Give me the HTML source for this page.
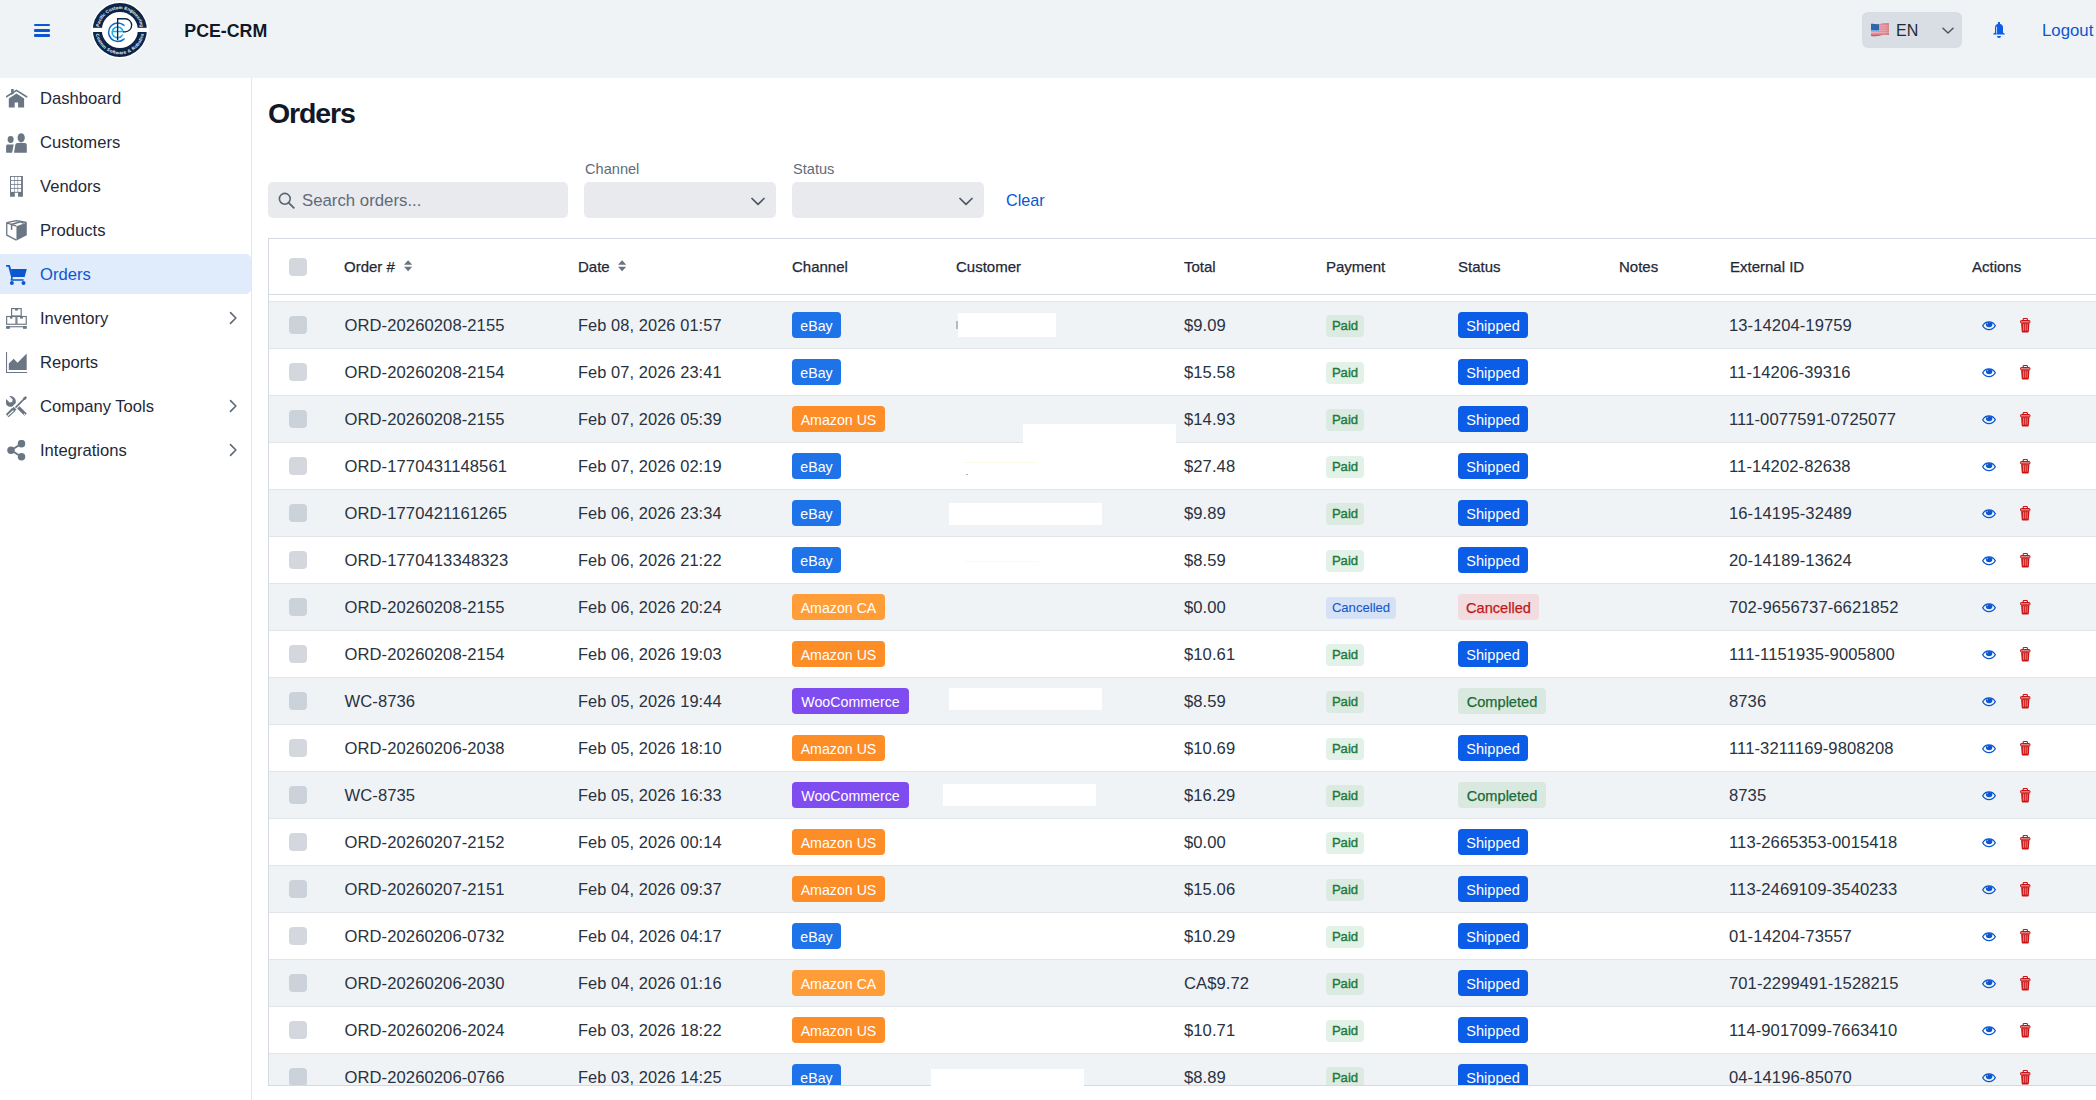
<!DOCTYPE html>
<html><head><meta charset="utf-8"><title>PCE-CRM Orders</title>
<style>
*{box-sizing:border-box;margin:0;padding:0}
html,body{width:2096px;height:1100px;overflow:hidden;background:#fff;font-family:"Liberation Sans",sans-serif;color:#1f2937}
.abs{position:absolute}
#hdr{position:absolute;left:0;top:0;width:2096px;height:78px;background:#f0f3f6}
#burger{position:absolute;left:34px;top:24.2px;width:16px;height:13px}
#burger i{position:absolute;left:0;width:16px;height:2.2px;border-radius:1.1px;background:#0b57d0}
#logo{position:absolute;left:91px;top:1px}
#brand{position:absolute;left:184.3px;top:21px;font-size:17.8px;font-weight:700;color:#111827;white-space:nowrap}
#lang{position:absolute;left:1862px;top:12px;width:100px;height:36px;border-radius:6px;background:#d9dde4}
#flag{position:absolute;left:9px;top:10px}
#en{position:absolute;left:34px;top:9.5px;font-size:16px;color:#1f2937}
#langchev{position:absolute;left:80px;top:14.5px;line-height:0}
#bell{position:absolute;left:1993px;top:21px}
#logout{position:absolute;left:2042px;top:20.7px;font-size:16.8px;color:#0b57d0;white-space:nowrap}
#side{position:absolute;left:0;top:78px;width:252px;height:1022px;border-right:1px solid #e3e6ea;background:#fff}
.nav{position:absolute;left:0;width:251px;height:40px}
.nav.active{background:#e0ebfc;border-radius:0 5px 5px 0}
.nicon{position:absolute;left:6px;top:10px;width:22px;height:22px}
.nlabel{position:absolute;left:40px;top:10.7px;font-size:16.6px;line-height:20px;color:#1f2937;white-space:nowrap}
.active .nlabel{color:#0b57d0}
.nchev{position:absolute;left:229px;top:12.5px}
#title{position:absolute;left:268px;top:96px;font-size:28.5px;font-weight:700;color:#111827;line-height:34px;letter-spacing:-1.1px}
.lbl{position:absolute;top:160px;font-size:14.6px;color:#5f6b7a;line-height:18px}
.inp{position:absolute;top:182px;height:36px;border-radius:5px;background:#e8eaee}
#search{left:268px;width:300px}
#search .ic{position:absolute;left:10px;top:10px}
#search .ph{position:absolute;left:34px;top:9px;font-size:16.8px;color:#5f6b7a;line-height:20px;white-space:nowrap}
#chsel{left:584px;width:192px}
#stsel{left:792px;width:192px}
.inp .sc{position:absolute;left:167px;top:15px;line-height:0;display:block}
#clear{position:absolute;left:1006px;top:190.3px;font-size:16.2px;color:#0b57d0;line-height:20px}
#tbl{position:absolute;left:268px;top:238px;width:1900px;height:848px;border:1px solid #d5dae0;overflow:hidden;background:#fff}
#thead{position:absolute;left:0;top:0;width:1900px;height:56px;border-bottom:1px solid #d5dae0;background:#fff}
.th{position:absolute;top:18px;font-size:15px;font-weight:400;color:#1f2937;line-height:20px;white-space:nowrap;-webkit-text-stroke:0.25px #1f2937}
.sort{position:absolute;top:21px;line-height:0}
.cb{position:absolute;left:20px;top:14px;width:18px;height:18px;border-radius:4px;background:#d4d8de}
#thead .cb{top:19px !important}
.row{position:absolute;left:0;width:1900px;height:47px;border-top:1px solid #e1e5ea;background:#fff}
.row.odd{background:#f0f3f6}
.row.odd .cb{background:#ccd2d9}
.t{position:absolute;top:14px;font-size:16.6px;line-height:20px;color:#283241;white-space:nowrap;letter-spacing:0.08px}
.c-ord{left:75.5px}
.c-date{left:309px;font-size:16.4px !important;top:13.4px !important}
.c-tot{left:915px}
.c-ext{left:1460px}
.bdg{position:absolute;left:523px;top:10px;height:26px;border-radius:4px;font-size:14.6px;line-height:28.4px;color:#fff;text-align:center;white-space:nowrap}
.bdg.ch-ebay,.bdg.ch-amzus,.bdg.ch-amzca,.bdg.ch-woo{font-size:14.2px}
.ch-ebay{background:#1f73e8}
.ch-amzus{background:#fd8d27}
.ch-amzca{background:#ff9e38}
.ch-woo{background:#7f4cf0}
.bdg.st-ship,.bdg.st-cancel,.bdg.st-done{left:1189px}
.st-ship{background:#0b5ce6}
.st-cancel{background:#f2dcdf;color:#c01818 !important;-webkit-text-stroke:0.25px #c01818}
.st-done{background:#d9e9e0;color:#1a6b36 !important;-webkit-text-stroke:0.25px #1a6b36}
.pb{position:absolute;left:1057px;top:13px;height:22px;border-radius:4px;font-size:13.1px;font-weight:400;-webkit-text-stroke:0.4px currentColor;line-height:22.8px;text-align:center;white-space:nowrap}
.pay-paid{background:#dcebe2;color:#1e7a3c}
.row:not(.odd) .pay-paid{background:#e3f2e8}
.row:not(.odd) .st-done{background:#e3f2e8}
.pay-cancel{background:#d5e2f6;color:#1558cc;-webkit-text-stroke:0.1px #1558cc !important}
.eye{position:absolute;left:1713px;top:19px;line-height:0}
.trash{position:absolute;left:1751px;top:16px;line-height:0}
.redact{position:absolute;background:#fff}
</style></head><body>
<div id="hdr">
 <div id="burger"><i style="top:0"></i><i style="top:5.15px"></i><i style="top:10.3px"></i></div>
 <div id="logo"><svg width="58" height="58" viewBox="0 0 58 58">
<circle cx="28.85" cy="29" r="28.4" fill="#fff"/>
<circle cx="28.85" cy="29" r="22.5" fill="none" stroke="#0b2447" stroke-width="9"/>
<rect x="0" y="26.8" width="58" height="4.2" fill="#fff"/>
<g fill="#f2f5f9" font-family="Liberation Sans" font-weight="700" font-size="4.5" text-anchor="middle"><text x="8.42" y="24.58" transform="rotate(-77.8 8.42 24.58)">P</text><text x="9.26" y="21.71" transform="rotate(-69.6 9.26 21.71)">a</text><text x="10.31" y="19.35" transform="rotate(-62.5 10.31 19.35)">c</text><text x="11.19" y="17.83" transform="rotate(-57.7 11.19 17.83)">i</text><text x="11.87" y="16.81" transform="rotate(-54.3 11.87 16.81)">f</text><text x="12.61" y="15.84" transform="rotate(-51.0 12.61 15.84)">i</text><text x="13.78" y="14.52" transform="rotate(-46.2 13.78 14.52)">c</text><text x="17.09" y="11.72" transform="rotate(-34.2 17.09 11.72)">C</text><text x="19.79" y="10.17" transform="rotate(-25.7 19.79 10.17)">u</text><text x="22.18" y="9.19" transform="rotate(-18.6 22.18 9.19)">s</text><text x="24.00" y="8.67" transform="rotate(-13.4 24.00 8.67)">t</text><text x="26.00" y="8.29" transform="rotate(-7.8 26.00 8.29)">o</text><text x="29.39" y="8.11" transform="rotate(1.5 29.39 8.11)">m</text><text x="34.34" y="8.83" transform="rotate(15.2 34.34 8.83)">E</text><text x="37.16" y="9.82" transform="rotate(23.4 37.16 9.82)">n</text><text x="39.57" y="11.06" transform="rotate(30.9 39.57 11.06)">g</text><text x="41.16" y="12.11" transform="rotate(36.1 41.16 12.11)">i</text><text x="42.64" y="13.30" transform="rotate(41.3 42.64 13.30)">n</text><text x="44.56" y="15.22" transform="rotate(48.7 44.56 15.22)">e</text><text x="46.22" y="17.37" transform="rotate(56.2 46.22 17.37)">e</text><text x="47.33" y="19.23" transform="rotate(62.1 47.33 19.23)">r</text><text x="47.92" y="20.45" transform="rotate(65.9 47.92 20.45)">i</text><text x="48.62" y="22.22" transform="rotate(71.1 48.62 22.22)">n</text><text x="49.33" y="24.84" transform="rotate(78.5 49.33 24.84)">g</text><text x="5.20" y="34.57" transform="rotate(76.8 5.20 34.57)">C</text><text x="6.22" y="37.86" transform="rotate(68.6 6.22 37.86)">u</text><text x="7.42" y="40.45" transform="rotate(61.9 7.42 40.45)">s</text><text x="8.48" y="42.25" transform="rotate(56.9 8.48 42.25)">t</text><text x="9.80" y="44.08" transform="rotate(51.6 9.80 44.08)">o</text><text x="12.34" y="46.83" transform="rotate(42.8 12.34 46.83)">m</text><text x="16.80" y="50.10" transform="rotate(29.7 16.80 50.10)">S</text><text x="19.77" y="51.54" transform="rotate(21.9 19.77 51.54)">o</text><text x="21.90" y="52.28" transform="rotate(16.6 21.90 52.28)">f</text><text x="23.35" y="52.67" transform="rotate(13.1 23.35 52.67)">t</text><text x="26.00" y="53.13" transform="rotate(6.7 26.00 53.13)">w</text><text x="29.45" y="53.29" transform="rotate(-1.4 29.45 53.29)">a</text><text x="31.84" y="53.12" transform="rotate(-7.1 31.84 53.12)">r</text><text x="34.20" y="52.70" transform="rotate(-12.7 34.20 52.70)">e</text><text x="38.75" y="51.19" transform="rotate(-24.0 38.75 51.19)">&amp;</text><text x="43.28" y="48.55" transform="rotate(-36.4 43.28 48.55)">R</text><text x="45.90" y="46.31" transform="rotate(-44.6 45.90 46.31)">o</text><text x="47.90" y="44.08" transform="rotate(-51.6 47.90 44.08)">b</text><text x="49.62" y="41.62" transform="rotate(-58.7 49.62 41.62)">o</text><text x="50.69" y="39.64" transform="rotate(-64.0 50.69 39.64)">t</text><text x="51.25" y="38.41" transform="rotate(-67.2 51.25 38.41)">i</text><text x="51.93" y="36.59" transform="rotate(-71.8 51.93 36.59)">c</text><text x="52.63" y="33.98" transform="rotate(-78.2 52.63 33.98)">s</text></g>
<path d="M33 24.3A9.25 9.25 0 1 0 33 38.1" fill="none" stroke="#1668c4" stroke-width="1.55"/>
<path d="M21.3 30.45H31.9A5.4 5.4 0 1 0 31.2 34.2" fill="none" stroke="#22aee6" stroke-width="1.65"/>
<path d="M26.6 17.7H34.1A6.55 6.55 0 0 1 34.1 30.8H32" fill="none" stroke="#0b2447" stroke-width="1.35"/>
<rect x="25.95" y="17.05" width="1.35" height="22.2" fill="#0b2447"/>
<g fill="#5aa0e0"><circle cx="33.2" cy="24.6" r=".8"/><circle cx="33.2" cy="37.9" r=".8"/><circle cx="31.6" cy="34" r=".7"/></g>
</svg></div>
 <div id="brand">PCE-CRM</div>
 <div id="lang"><span id="flag"><svg width="19" height="15" viewBox="0 0 19 15"><defs><clipPath id="fc"><path d="M0 1.9C3 1.6 5.6 2.9 8.3 2.1 11 1.2 14 0.7 18 1.2V13C14 12.6 11 13.1 8.3 13.8 5.6 14.5 3 14.2 0 14z"/></clipPath><linearGradient id="fg" x1="0" x2="1" y1="0" y2="0"><stop offset="0" stop-color="#000" stop-opacity="0"/><stop offset=".75" stop-color="#000" stop-opacity=".05"/><stop offset="1" stop-color="#000" stop-opacity=".15"/></linearGradient></defs><g clip-path="url(#fc)"><rect width="19" height="15" fill="#ec8f9b"/><g fill="#f4b3bb"><rect y="3.3" width="19" height="1"/><rect y="5.5" width="19" height="1"/><rect y="7.7" width="19" height="1"/><rect y="9.9" width="19" height="1"/></g><rect y="12.6" width="19" height="2.4" fill="#c9616d"/><rect x="0" y="0" width="8" height="9" fill="#2f67ad"/><rect x="0" y="8.2" width="8" height="0.9" fill="#7fc3ef"/><rect width="19" height="15" fill="url(#fg)"/></g></svg></span><span id="en">EN</span><span id="langchev"><svg width="12" height="8" viewBox="0 0 12 8"><path d="M1 1.2l5 4.8 5-4.8" fill="none" stroke="#4b5563" stroke-width="1.5" stroke-linecap="round" stroke-linejoin="round"/></svg></span></div>
 <div id="bell"><svg width="13" height="18" viewBox="0 0 13 18"><rect x="4.9" y="0.9" width="2.1" height="2.6" rx=".4" fill="#0b5ce6"/><path d="M2 6.2C2 4.3 3.8 2.8 6 2.8s4 1.5 4 3.4V11.4L11.9 13V13.5H0.1V13L2 11.4z" fill="#0b5ce6"/><path d="M3.6 5.6V12.6" stroke="#fff" stroke-width=".9" opacity=".85"/><path d="M4 15H8A2 2 0 0 1 4 15z" fill="#0b5ce6"/></svg></div>
 <div id="logout">Logout</div>
</div>
<div id="side">
<div class="nav" style="top:0px"><span class="nicon"><svg width="22" height="22" viewBox="0 0 22 22"><path d="M0.3 8.8L10.45 2.4 20.6 8.8" fill="none" stroke="#6b7684" stroke-width="1.6" stroke-linecap="round" stroke-linejoin="round"/><path d="M5.1 1h2.6v4.6L5.1 7.3z" fill="#6b7684"/><path d="M2.8 10.4L10.45 5.5 18.1 10.4V19.5H12.1V14.5H8.7V19.5H2.8z" fill="#6b7684"/></svg></span><span class="nlabel">Dashboard</span></div><div class="nav" style="top:44px"><span class="nicon"><svg width="22" height="22" viewBox="0 0 22 22"><ellipse cx="4.6" cy="7.5" rx="3" ry="3.4" fill="#6b7684"/><path d="M1.6 12.4h6.1l-1.6 8.3H0.1V13.9c0-.8.7-1.5 1.5-1.5z" fill="#6b7684"/><ellipse cx="15.2" cy="5.8" rx="3.6" ry="4.6" fill="#6b7684"/><path d="M11.4 10.9h7.4c1.1 0 2 .9 2 2v7.8H8l1.3-7.7c.2-1.2 1-2.1 2.1-2.1z" fill="#6b7684"/></svg></span><span class="nlabel">Customers</span></div><div class="nav" style="top:88px"><span class="nicon"><svg width="22" height="22" viewBox="0 0 22 22"><path d="M4.05 0.05h12.85v20.75h-4.8v-4h-3.3v4H4.05z" fill="#6b7684"/><rect x="5.00" y="0.85" width="3.0" height="3.15" fill="#fff"/><rect x="5.00" y="4.80" width="3.0" height="3.15" fill="#fff"/><rect x="5.00" y="8.75" width="3.0" height="3.15" fill="#fff"/><rect x="5.00" y="12.70" width="3.0" height="3.15" fill="#fff"/><rect x="8.55" y="0.85" width="3.0" height="3.15" fill="#fff"/><rect x="8.55" y="4.80" width="3.0" height="3.15" fill="#fff"/><rect x="8.55" y="8.75" width="3.0" height="3.15" fill="#fff"/><rect x="8.55" y="12.70" width="3.0" height="3.15" fill="#fff"/><rect x="12.10" y="0.85" width="3.0" height="3.15" fill="#fff"/><rect x="12.10" y="4.80" width="3.0" height="3.15" fill="#fff"/><rect x="12.10" y="8.75" width="3.0" height="3.15" fill="#fff"/><rect x="12.10" y="12.70" width="3.0" height="3.15" fill="#fff"/></svg></span><span class="nlabel">Vendors</span></div><div class="nav" style="top:132px"><span class="nicon"><svg width="22" height="22" viewBox="0 0 22 22"><path d="M10.45 6.2L20.8 2.4V15.3L10.45 20.6z" fill="#6b7684"/><path d="M10.45 6.2L0.75 2.9V15.2L10.45 20.1" fill="none" stroke="#6b7684" stroke-width="1.3" stroke-linejoin="round"/><path d="M0.75 2.7L10.45 0.6 20.5 2.5" fill="none" stroke="#6b7684" stroke-width="1.3" stroke-linejoin="round"/><path d="M5.2 4.6L15.4 1.6" stroke="#6b7684" stroke-width="1.6"/><path d="M5.6 4.8V9.9" stroke="#6b7684" stroke-width="1.5"/><path d="M15 1.6L17.6 3.4" stroke="#6b7684" stroke-width="1.4"/></svg></span><span class="nlabel">Products</span></div><div class="nav active" style="top:176px"><span class="nicon"><svg width="22" height="22" viewBox="0 0 22 22"><path d="M0.1 1.9H3.2L6.2 13.7" fill="none" stroke="#0b57d0" stroke-width="1.9" stroke-linejoin="round"/><path d="M5 5.1H20.8L18.6 13.1H5.8z" fill="#0b57d0"/><path d="M6 13.6L5.4 16H17.6" fill="none" stroke="#0b57d0" stroke-width="1.6" stroke-linejoin="round"/><circle cx="5.9" cy="18.9" r="2" fill="#0b57d0"/><circle cx="17.5" cy="18.9" r="2" fill="#0b57d0"/></svg></span><span class="nlabel">Orders</span></div><div class="nav" style="top:220px"><span class="nicon"><svg width="22" height="22" viewBox="0 0 22 22"><g fill="none" stroke="#6b7684" stroke-width="1.15"><rect x="5.6" y="0.6" width="9.6" height="7.4"/><rect x="0.65" y="8.5" width="9.35" height="7.75"/><rect x="10.9" y="8.5" width="9.35" height="7.75"/></g><g fill="#6b7684"><rect x="9.1" y="0.6" width="2.7" height="2"/><rect x="4" y="8.5" width="2.4" height="2.1"/><rect x="14.1" y="8.5" width="2.8" height="2.1"/><rect x="0.1" y="18.2" width="20.7" height="1.1"/><rect x="0.1" y="18.2" width="3.8" height="2.6"/><rect x="17" y="18.2" width="3.8" height="2.6"/></g></svg></span><span class="nlabel">Inventory</span><span class=nchev><svg width="9" height="14" viewBox="0 0 9 14"><path d="M1.5 1.6l5.4 5.4-5.4 5.4" fill="none" stroke="#5b6573" stroke-width="1.55" stroke-linecap="round" stroke-linejoin="round"/></svg></span></div><div class="nav" style="top:264px"><span class="nicon"><svg width="22" height="22" viewBox="0 0 22 22"><path d="M0.5 0.4V20.5H20.6" fill="none" stroke="#6b7684" stroke-width="1.1" stroke-linecap="round"/><path d="M2.8 11.4L7.7 6.7 11.5 10.8 20.7 1.55V17.9H2.8z" fill="#6b7684"/></svg></span><span class="nlabel">Reports</span></div><div class="nav" style="top:308px"><span class="nicon"><svg width="22" height="22" viewBox="0 0 22 22"><path d="M3.2 0.1C5 -.1 6.9.5 8.2 1.8c1.5 1.5 2 3.6 1.4 5.5L8.3 8.6 6.3 10.6C4.4 11.2 2.3 10.7.9 9.3-.1 8.3-.1 6.500.1 2.9l3.5 3.5 2.6-.5.5-2.500z" fill="#6b7684"/><path d="M12.3 11.3L19.6 18.7" stroke="#6b7684" stroke-width="3.3"/><circle cx="18.4" cy="18.2" r=".7" fill="#fff"/><path d="M19.8 0.3L21 1.5 19.5 3.7 18.3 4 10.1 12.2 8.9 11 17.1 2.8 17.4 1.6z" fill="#6b7684"/><path d="M7.6 10.8L10.6 13.8 9.2 14.6 8.9 15.6 2.6 21.2-.3 18.3 5.8 12.2 6.8 11.9z" fill="#6b7684"/><path d="M7 15L2.1 19.4" stroke="#fff" stroke-width="1.2" stroke-linecap="round"/></svg></span><span class="nlabel">Company Tools</span><span class=nchev><svg width="9" height="14" viewBox="0 0 9 14"><path d="M1.5 1.6l5.4 5.4-5.4 5.4" fill="none" stroke="#5b6573" stroke-width="1.55" stroke-linecap="round" stroke-linejoin="round"/></svg></span></div><div class="nav" style="top:352px"><span class="nicon"><svg width="22" height="22" viewBox="0 0 22 22"><circle cx="15.5" cy="3.7" r="3.75" fill="#6b7684"/><circle cx="5" cy="10.2" r="3.75" fill="#6b7684"/><circle cx="15.5" cy="16.8" r="3.75" fill="#6b7684"/><path d="M15.5 3.7L5 10.2 15.5 16.8" fill="none" stroke="#6b7684" stroke-width="1.9"/></svg></span><span class="nlabel">Integrations</span><span class=nchev><svg width="9" height="14" viewBox="0 0 9 14"><path d="M1.5 1.6l5.4 5.4-5.4 5.4" fill="none" stroke="#5b6573" stroke-width="1.55" stroke-linecap="round" stroke-linejoin="round"/></svg></span></div>
</div>
<div id="title">Orders</div>
<div class="lbl" style="left:585px">Channel</div>
<div class="lbl" style="left:793px">Status</div>
<div class="inp" id="search"><span class="ic"><svg width="17" height="17" viewBox="0 0 17 17"><circle cx="6.8" cy="6.8" r="5.4" fill="none" stroke="#5b6472" stroke-width="1.6"/><path d="M10.8 10.8l5 5" stroke="#5b6472" stroke-width="1.8" stroke-linecap="round"/></svg></span><span class="ph">Search orders...</span></div>
<div class="inp" id="chsel"><span class="sc"><svg width="14" height="9" viewBox="0 0 14 9"><path d="M1 1.5l6 5.8 6-5.8" fill="none" stroke="#4b5563" stroke-width="1.7" stroke-linecap="round" stroke-linejoin="round"/></svg></span></div>
<div class="inp" id="stsel"><span class="sc"><svg width="14" height="9" viewBox="0 0 14 9"><path d="M1 1.5l6 5.8 6-5.8" fill="none" stroke="#4b5563" stroke-width="1.7" stroke-linecap="round" stroke-linejoin="round"/></svg></span></div>
<div id="clear">Clear</div>
<div id="tbl">
 <div id="thead">
  <span class="cb"></span>
  <span class="th" style="left:75px">Order #</span><span class="sort" style="left:134.6px"><svg width="9" height="12" viewBox="0 0 9 12"><path d="M4.1 0.3L8.2 4.8H0z M4.1 11.3L0 6.8H8.2z" fill="#6b7280"/></svg></span>
  <span class="th" style="left:309px">Date</span><span class="sort" style="left:348.6px"><svg width="9" height="12" viewBox="0 0 9 12"><path d="M4.1 0.3L8.2 4.8H0z M4.1 11.3L0 6.8H8.2z" fill="#6b7280"/></svg></span>
  <span class="th" style="left:523px">Channel</span>
  <span class="th" style="left:687px">Customer</span>
  <span class="th" style="left:915px">Total</span>
  <span class="th" style="left:1057px">Payment</span>
  <span class="th" style="left:1189px">Status</span>
  <span class="th" style="left:1350px">Notes</span>
  <span class="th" style="left:1461px">External ID</span>
  <span class="th" style="left:1703px">Actions</span>
 </div>
 <div class="row odd" style="top:62px">
<span class="cb"></span>
<span class="t c-ord">ORD-20260208-2155</span>
<span class="t c-date">Feb 08, 2026 01:57</span>
<span class="bdg ch-ebay" style="width:49px">eBay</span>
<span class="t c-tot">$9.09</span>
<span class="pb pay-paid" style="width:38px">Paid</span>
<span class="bdg st-ship" style="width:70px">Shipped</span>
<span class="t c-ext">13-14204-19759</span>
<span class="eye"><svg width="15" height="10" viewBox="0 0 15 10"><path d="M7 0.9C4 0.9 1.7 2.8 0.7 4.8 1.7 6.7 4 8.6 7 8.6s5.3-1.9 6.3-3.8C12.3 2.8 10 0.9 7 0.9z" fill="none" stroke="#0b57d0" stroke-width="1.3"/><ellipse cx="7.1" cy="3.6" rx="3.2" ry="2.7" fill="#0b57d0"/><circle cx="5.4" cy="2.6" r=".7" fill="#8fb3ec"/></svg></span>
<span class="trash"><svg width="11" height="15" viewBox="0 0 11 15"><path d="M3.2 2.4V1.3c0-.5.3-.8.8-.8h2.6c.5 0 .8.3.8.8v1.1" fill="none" stroke="#c81414" stroke-width="1.1"/><rect x="0.55" y="2.5" width="9.4" height="2.5" rx=".7" fill="#df8080" stroke="#c81414" stroke-width="1"/><path d="M1.1 5.2h8.3l-.55 8c-.05.8-.6 1.3-1.3 1.3H3c-.7 0-1.25-.5-1.3-1.3z" fill="#c81414"/><rect x="2.9" y="6.1" width=".9" height="6.6" fill="#fff" opacity=".55"/><rect x="4.8" y="6.1" width=".9" height="6.6" fill="#fff" opacity=".55"/><rect x="6.7" y="6.1" width=".9" height="6.6" fill="#fff" opacity=".55"/></svg></span>
</div><div class="row" style="top:109px">
<span class="cb"></span>
<span class="t c-ord">ORD-20260208-2154</span>
<span class="t c-date">Feb 07, 2026 23:41</span>
<span class="bdg ch-ebay" style="width:49px">eBay</span>
<span class="t c-tot">$15.58</span>
<span class="pb pay-paid" style="width:38px">Paid</span>
<span class="bdg st-ship" style="width:70px">Shipped</span>
<span class="t c-ext">11-14206-39316</span>
<span class="eye"><svg width="15" height="10" viewBox="0 0 15 10"><path d="M7 0.9C4 0.9 1.7 2.8 0.7 4.8 1.7 6.7 4 8.6 7 8.6s5.3-1.9 6.3-3.8C12.3 2.8 10 0.9 7 0.9z" fill="none" stroke="#0b57d0" stroke-width="1.3"/><ellipse cx="7.1" cy="3.6" rx="3.2" ry="2.7" fill="#0b57d0"/><circle cx="5.4" cy="2.6" r=".7" fill="#8fb3ec"/></svg></span>
<span class="trash"><svg width="11" height="15" viewBox="0 0 11 15"><path d="M3.2 2.4V1.3c0-.5.3-.8.8-.8h2.6c.5 0 .8.3.8.8v1.1" fill="none" stroke="#c81414" stroke-width="1.1"/><rect x="0.55" y="2.5" width="9.4" height="2.5" rx=".7" fill="#df8080" stroke="#c81414" stroke-width="1"/><path d="M1.1 5.2h8.3l-.55 8c-.05.8-.6 1.3-1.3 1.3H3c-.7 0-1.25-.5-1.3-1.3z" fill="#c81414"/><rect x="2.9" y="6.1" width=".9" height="6.6" fill="#fff" opacity=".55"/><rect x="4.8" y="6.1" width=".9" height="6.6" fill="#fff" opacity=".55"/><rect x="6.7" y="6.1" width=".9" height="6.6" fill="#fff" opacity=".55"/></svg></span>
</div><div class="row odd" style="top:156px">
<span class="cb"></span>
<span class="t c-ord">ORD-20260208-2155</span>
<span class="t c-date">Feb 07, 2026 05:39</span>
<span class="bdg ch-amzus" style="width:93px">Amazon US</span>
<span class="t c-tot">$14.93</span>
<span class="pb pay-paid" style="width:38px">Paid</span>
<span class="bdg st-ship" style="width:70px">Shipped</span>
<span class="t c-ext">111-0077591-0725077</span>
<span class="eye"><svg width="15" height="10" viewBox="0 0 15 10"><path d="M7 0.9C4 0.9 1.7 2.8 0.7 4.8 1.7 6.7 4 8.6 7 8.6s5.3-1.9 6.3-3.8C12.3 2.8 10 0.9 7 0.9z" fill="none" stroke="#0b57d0" stroke-width="1.3"/><ellipse cx="7.1" cy="3.6" rx="3.2" ry="2.7" fill="#0b57d0"/><circle cx="5.4" cy="2.6" r=".7" fill="#8fb3ec"/></svg></span>
<span class="trash"><svg width="11" height="15" viewBox="0 0 11 15"><path d="M3.2 2.4V1.3c0-.5.3-.8.8-.8h2.6c.5 0 .8.3.8.8v1.1" fill="none" stroke="#c81414" stroke-width="1.1"/><rect x="0.55" y="2.5" width="9.4" height="2.5" rx=".7" fill="#df8080" stroke="#c81414" stroke-width="1"/><path d="M1.1 5.2h8.3l-.55 8c-.05.8-.6 1.3-1.3 1.3H3c-.7 0-1.25-.5-1.3-1.3z" fill="#c81414"/><rect x="2.9" y="6.1" width=".9" height="6.6" fill="#fff" opacity=".55"/><rect x="4.8" y="6.1" width=".9" height="6.6" fill="#fff" opacity=".55"/><rect x="6.7" y="6.1" width=".9" height="6.6" fill="#fff" opacity=".55"/></svg></span>
</div><div class="row" style="top:203px">
<span class="cb"></span>
<span class="t c-ord">ORD-1770431148561</span>
<span class="t c-date">Feb 07, 2026 02:19</span>
<span class="bdg ch-ebay" style="width:49px">eBay</span>
<span class="t c-tot">$27.48</span>
<span class="pb pay-paid" style="width:38px">Paid</span>
<span class="bdg st-ship" style="width:70px">Shipped</span>
<span class="t c-ext">11-14202-82638</span>
<span class="eye"><svg width="15" height="10" viewBox="0 0 15 10"><path d="M7 0.9C4 0.9 1.7 2.8 0.7 4.8 1.7 6.7 4 8.6 7 8.6s5.3-1.9 6.3-3.8C12.3 2.8 10 0.9 7 0.9z" fill="none" stroke="#0b57d0" stroke-width="1.3"/><ellipse cx="7.1" cy="3.6" rx="3.2" ry="2.7" fill="#0b57d0"/><circle cx="5.4" cy="2.6" r=".7" fill="#8fb3ec"/></svg></span>
<span class="trash"><svg width="11" height="15" viewBox="0 0 11 15"><path d="M3.2 2.4V1.3c0-.5.3-.8.8-.8h2.6c.5 0 .8.3.8.8v1.1" fill="none" stroke="#c81414" stroke-width="1.1"/><rect x="0.55" y="2.5" width="9.4" height="2.5" rx=".7" fill="#df8080" stroke="#c81414" stroke-width="1"/><path d="M1.1 5.2h8.3l-.55 8c-.05.8-.6 1.3-1.3 1.3H3c-.7 0-1.25-.5-1.3-1.3z" fill="#c81414"/><rect x="2.9" y="6.1" width=".9" height="6.6" fill="#fff" opacity=".55"/><rect x="4.8" y="6.1" width=".9" height="6.6" fill="#fff" opacity=".55"/><rect x="6.7" y="6.1" width=".9" height="6.6" fill="#fff" opacity=".55"/></svg></span>
</div><div class="row odd" style="top:250px">
<span class="cb"></span>
<span class="t c-ord">ORD-1770421161265</span>
<span class="t c-date">Feb 06, 2026 23:34</span>
<span class="bdg ch-ebay" style="width:49px">eBay</span>
<span class="t c-tot">$9.89</span>
<span class="pb pay-paid" style="width:38px">Paid</span>
<span class="bdg st-ship" style="width:70px">Shipped</span>
<span class="t c-ext">16-14195-32489</span>
<span class="eye"><svg width="15" height="10" viewBox="0 0 15 10"><path d="M7 0.9C4 0.9 1.7 2.8 0.7 4.8 1.7 6.7 4 8.6 7 8.6s5.3-1.9 6.3-3.8C12.3 2.8 10 0.9 7 0.9z" fill="none" stroke="#0b57d0" stroke-width="1.3"/><ellipse cx="7.1" cy="3.6" rx="3.2" ry="2.7" fill="#0b57d0"/><circle cx="5.4" cy="2.6" r=".7" fill="#8fb3ec"/></svg></span>
<span class="trash"><svg width="11" height="15" viewBox="0 0 11 15"><path d="M3.2 2.4V1.3c0-.5.3-.8.8-.8h2.6c.5 0 .8.3.8.8v1.1" fill="none" stroke="#c81414" stroke-width="1.1"/><rect x="0.55" y="2.5" width="9.4" height="2.5" rx=".7" fill="#df8080" stroke="#c81414" stroke-width="1"/><path d="M1.1 5.2h8.3l-.55 8c-.05.8-.6 1.3-1.3 1.3H3c-.7 0-1.25-.5-1.3-1.3z" fill="#c81414"/><rect x="2.9" y="6.1" width=".9" height="6.6" fill="#fff" opacity=".55"/><rect x="4.8" y="6.1" width=".9" height="6.6" fill="#fff" opacity=".55"/><rect x="6.7" y="6.1" width=".9" height="6.6" fill="#fff" opacity=".55"/></svg></span>
</div><div class="row" style="top:297px">
<span class="cb"></span>
<span class="t c-ord">ORD-1770413348323</span>
<span class="t c-date">Feb 06, 2026 21:22</span>
<span class="bdg ch-ebay" style="width:49px">eBay</span>
<span class="t c-tot">$8.59</span>
<span class="pb pay-paid" style="width:38px">Paid</span>
<span class="bdg st-ship" style="width:70px">Shipped</span>
<span class="t c-ext">20-14189-13624</span>
<span class="eye"><svg width="15" height="10" viewBox="0 0 15 10"><path d="M7 0.9C4 0.9 1.7 2.8 0.7 4.8 1.7 6.7 4 8.6 7 8.6s5.3-1.9 6.3-3.8C12.3 2.8 10 0.9 7 0.9z" fill="none" stroke="#0b57d0" stroke-width="1.3"/><ellipse cx="7.1" cy="3.6" rx="3.2" ry="2.7" fill="#0b57d0"/><circle cx="5.4" cy="2.6" r=".7" fill="#8fb3ec"/></svg></span>
<span class="trash"><svg width="11" height="15" viewBox="0 0 11 15"><path d="M3.2 2.4V1.3c0-.5.3-.8.8-.8h2.6c.5 0 .8.3.8.8v1.1" fill="none" stroke="#c81414" stroke-width="1.1"/><rect x="0.55" y="2.5" width="9.4" height="2.5" rx=".7" fill="#df8080" stroke="#c81414" stroke-width="1"/><path d="M1.1 5.2h8.3l-.55 8c-.05.8-.6 1.3-1.3 1.3H3c-.7 0-1.25-.5-1.3-1.3z" fill="#c81414"/><rect x="2.9" y="6.1" width=".9" height="6.6" fill="#fff" opacity=".55"/><rect x="4.8" y="6.1" width=".9" height="6.6" fill="#fff" opacity=".55"/><rect x="6.7" y="6.1" width=".9" height="6.6" fill="#fff" opacity=".55"/></svg></span>
</div><div class="row odd" style="top:344px">
<span class="cb"></span>
<span class="t c-ord">ORD-20260208-2155</span>
<span class="t c-date">Feb 06, 2026 20:24</span>
<span class="bdg ch-amzca" style="width:93px">Amazon CA</span>
<span class="t c-tot">$0.00</span>
<span class="pb pay-cancel" style="width:70px">Cancelled</span>
<span class="bdg st-cancel" style="width:81px">Cancelled</span>
<span class="t c-ext">702-9656737-6621852</span>
<span class="eye"><svg width="15" height="10" viewBox="0 0 15 10"><path d="M7 0.9C4 0.9 1.7 2.8 0.7 4.8 1.7 6.7 4 8.6 7 8.6s5.3-1.9 6.3-3.8C12.3 2.8 10 0.9 7 0.9z" fill="none" stroke="#0b57d0" stroke-width="1.3"/><ellipse cx="7.1" cy="3.6" rx="3.2" ry="2.7" fill="#0b57d0"/><circle cx="5.4" cy="2.6" r=".7" fill="#8fb3ec"/></svg></span>
<span class="trash"><svg width="11" height="15" viewBox="0 0 11 15"><path d="M3.2 2.4V1.3c0-.5.3-.8.8-.8h2.6c.5 0 .8.3.8.8v1.1" fill="none" stroke="#c81414" stroke-width="1.1"/><rect x="0.55" y="2.5" width="9.4" height="2.5" rx=".7" fill="#df8080" stroke="#c81414" stroke-width="1"/><path d="M1.1 5.2h8.3l-.55 8c-.05.8-.6 1.3-1.3 1.3H3c-.7 0-1.25-.5-1.3-1.3z" fill="#c81414"/><rect x="2.9" y="6.1" width=".9" height="6.6" fill="#fff" opacity=".55"/><rect x="4.8" y="6.1" width=".9" height="6.6" fill="#fff" opacity=".55"/><rect x="6.7" y="6.1" width=".9" height="6.6" fill="#fff" opacity=".55"/></svg></span>
</div><div class="row" style="top:391px">
<span class="cb"></span>
<span class="t c-ord">ORD-20260208-2154</span>
<span class="t c-date">Feb 06, 2026 19:03</span>
<span class="bdg ch-amzus" style="width:93px">Amazon US</span>
<span class="t c-tot">$10.61</span>
<span class="pb pay-paid" style="width:38px">Paid</span>
<span class="bdg st-ship" style="width:70px">Shipped</span>
<span class="t c-ext">111-1151935-9005800</span>
<span class="eye"><svg width="15" height="10" viewBox="0 0 15 10"><path d="M7 0.9C4 0.9 1.7 2.8 0.7 4.8 1.7 6.7 4 8.6 7 8.6s5.3-1.9 6.3-3.8C12.3 2.8 10 0.9 7 0.9z" fill="none" stroke="#0b57d0" stroke-width="1.3"/><ellipse cx="7.1" cy="3.6" rx="3.2" ry="2.7" fill="#0b57d0"/><circle cx="5.4" cy="2.6" r=".7" fill="#8fb3ec"/></svg></span>
<span class="trash"><svg width="11" height="15" viewBox="0 0 11 15"><path d="M3.2 2.4V1.3c0-.5.3-.8.8-.8h2.6c.5 0 .8.3.8.8v1.1" fill="none" stroke="#c81414" stroke-width="1.1"/><rect x="0.55" y="2.5" width="9.4" height="2.5" rx=".7" fill="#df8080" stroke="#c81414" stroke-width="1"/><path d="M1.1 5.2h8.3l-.55 8c-.05.8-.6 1.3-1.3 1.3H3c-.7 0-1.25-.5-1.3-1.3z" fill="#c81414"/><rect x="2.9" y="6.1" width=".9" height="6.6" fill="#fff" opacity=".55"/><rect x="4.8" y="6.1" width=".9" height="6.6" fill="#fff" opacity=".55"/><rect x="6.7" y="6.1" width=".9" height="6.6" fill="#fff" opacity=".55"/></svg></span>
</div><div class="row odd" style="top:438px">
<span class="cb"></span>
<span class="t c-ord">WC-8736</span>
<span class="t c-date">Feb 05, 2026 19:44</span>
<span class="bdg ch-woo" style="width:117px">WooCommerce</span>
<span class="t c-tot">$8.59</span>
<span class="pb pay-paid" style="width:38px">Paid</span>
<span class="bdg st-done" style="width:88px">Completed</span>
<span class="t c-ext">8736</span>
<span class="eye"><svg width="15" height="10" viewBox="0 0 15 10"><path d="M7 0.9C4 0.9 1.7 2.8 0.7 4.8 1.7 6.7 4 8.6 7 8.6s5.3-1.9 6.3-3.8C12.3 2.8 10 0.9 7 0.9z" fill="none" stroke="#0b57d0" stroke-width="1.3"/><ellipse cx="7.1" cy="3.6" rx="3.2" ry="2.7" fill="#0b57d0"/><circle cx="5.4" cy="2.6" r=".7" fill="#8fb3ec"/></svg></span>
<span class="trash"><svg width="11" height="15" viewBox="0 0 11 15"><path d="M3.2 2.4V1.3c0-.5.3-.8.8-.8h2.6c.5 0 .8.3.8.8v1.1" fill="none" stroke="#c81414" stroke-width="1.1"/><rect x="0.55" y="2.5" width="9.4" height="2.5" rx=".7" fill="#df8080" stroke="#c81414" stroke-width="1"/><path d="M1.1 5.2h8.3l-.55 8c-.05.8-.6 1.3-1.3 1.3H3c-.7 0-1.25-.5-1.3-1.3z" fill="#c81414"/><rect x="2.9" y="6.1" width=".9" height="6.6" fill="#fff" opacity=".55"/><rect x="4.8" y="6.1" width=".9" height="6.6" fill="#fff" opacity=".55"/><rect x="6.7" y="6.1" width=".9" height="6.6" fill="#fff" opacity=".55"/></svg></span>
</div><div class="row" style="top:485px">
<span class="cb"></span>
<span class="t c-ord">ORD-20260206-2038</span>
<span class="t c-date">Feb 05, 2026 18:10</span>
<span class="bdg ch-amzus" style="width:93px">Amazon US</span>
<span class="t c-tot">$10.69</span>
<span class="pb pay-paid" style="width:38px">Paid</span>
<span class="bdg st-ship" style="width:70px">Shipped</span>
<span class="t c-ext">111-3211169-9808208</span>
<span class="eye"><svg width="15" height="10" viewBox="0 0 15 10"><path d="M7 0.9C4 0.9 1.7 2.8 0.7 4.8 1.7 6.7 4 8.6 7 8.6s5.3-1.9 6.3-3.8C12.3 2.8 10 0.9 7 0.9z" fill="none" stroke="#0b57d0" stroke-width="1.3"/><ellipse cx="7.1" cy="3.6" rx="3.2" ry="2.7" fill="#0b57d0"/><circle cx="5.4" cy="2.6" r=".7" fill="#8fb3ec"/></svg></span>
<span class="trash"><svg width="11" height="15" viewBox="0 0 11 15"><path d="M3.2 2.4V1.3c0-.5.3-.8.8-.8h2.6c.5 0 .8.3.8.8v1.1" fill="none" stroke="#c81414" stroke-width="1.1"/><rect x="0.55" y="2.5" width="9.4" height="2.5" rx=".7" fill="#df8080" stroke="#c81414" stroke-width="1"/><path d="M1.1 5.2h8.3l-.55 8c-.05.8-.6 1.3-1.3 1.3H3c-.7 0-1.25-.5-1.3-1.3z" fill="#c81414"/><rect x="2.9" y="6.1" width=".9" height="6.6" fill="#fff" opacity=".55"/><rect x="4.8" y="6.1" width=".9" height="6.6" fill="#fff" opacity=".55"/><rect x="6.7" y="6.1" width=".9" height="6.6" fill="#fff" opacity=".55"/></svg></span>
</div><div class="row odd" style="top:532px">
<span class="cb"></span>
<span class="t c-ord">WC-8735</span>
<span class="t c-date">Feb 05, 2026 16:33</span>
<span class="bdg ch-woo" style="width:117px">WooCommerce</span>
<span class="t c-tot">$16.29</span>
<span class="pb pay-paid" style="width:38px">Paid</span>
<span class="bdg st-done" style="width:88px">Completed</span>
<span class="t c-ext">8735</span>
<span class="eye"><svg width="15" height="10" viewBox="0 0 15 10"><path d="M7 0.9C4 0.9 1.7 2.8 0.7 4.8 1.7 6.7 4 8.6 7 8.6s5.3-1.9 6.3-3.8C12.3 2.8 10 0.9 7 0.9z" fill="none" stroke="#0b57d0" stroke-width="1.3"/><ellipse cx="7.1" cy="3.6" rx="3.2" ry="2.7" fill="#0b57d0"/><circle cx="5.4" cy="2.6" r=".7" fill="#8fb3ec"/></svg></span>
<span class="trash"><svg width="11" height="15" viewBox="0 0 11 15"><path d="M3.2 2.4V1.3c0-.5.3-.8.8-.8h2.6c.5 0 .8.3.8.8v1.1" fill="none" stroke="#c81414" stroke-width="1.1"/><rect x="0.55" y="2.5" width="9.4" height="2.5" rx=".7" fill="#df8080" stroke="#c81414" stroke-width="1"/><path d="M1.1 5.2h8.3l-.55 8c-.05.8-.6 1.3-1.3 1.3H3c-.7 0-1.25-.5-1.3-1.3z" fill="#c81414"/><rect x="2.9" y="6.1" width=".9" height="6.6" fill="#fff" opacity=".55"/><rect x="4.8" y="6.1" width=".9" height="6.6" fill="#fff" opacity=".55"/><rect x="6.7" y="6.1" width=".9" height="6.6" fill="#fff" opacity=".55"/></svg></span>
</div><div class="row" style="top:579px">
<span class="cb"></span>
<span class="t c-ord">ORD-20260207-2152</span>
<span class="t c-date">Feb 05, 2026 00:14</span>
<span class="bdg ch-amzus" style="width:93px">Amazon US</span>
<span class="t c-tot">$0.00</span>
<span class="pb pay-paid" style="width:38px">Paid</span>
<span class="bdg st-ship" style="width:70px">Shipped</span>
<span class="t c-ext">113-2665353-0015418</span>
<span class="eye"><svg width="15" height="10" viewBox="0 0 15 10"><path d="M7 0.9C4 0.9 1.7 2.8 0.7 4.8 1.7 6.7 4 8.6 7 8.6s5.3-1.9 6.3-3.8C12.3 2.8 10 0.9 7 0.9z" fill="none" stroke="#0b57d0" stroke-width="1.3"/><ellipse cx="7.1" cy="3.6" rx="3.2" ry="2.7" fill="#0b57d0"/><circle cx="5.4" cy="2.6" r=".7" fill="#8fb3ec"/></svg></span>
<span class="trash"><svg width="11" height="15" viewBox="0 0 11 15"><path d="M3.2 2.4V1.3c0-.5.3-.8.8-.8h2.6c.5 0 .8.3.8.8v1.1" fill="none" stroke="#c81414" stroke-width="1.1"/><rect x="0.55" y="2.5" width="9.4" height="2.5" rx=".7" fill="#df8080" stroke="#c81414" stroke-width="1"/><path d="M1.1 5.2h8.3l-.55 8c-.05.8-.6 1.3-1.3 1.3H3c-.7 0-1.25-.5-1.3-1.3z" fill="#c81414"/><rect x="2.9" y="6.1" width=".9" height="6.6" fill="#fff" opacity=".55"/><rect x="4.8" y="6.1" width=".9" height="6.6" fill="#fff" opacity=".55"/><rect x="6.7" y="6.1" width=".9" height="6.6" fill="#fff" opacity=".55"/></svg></span>
</div><div class="row odd" style="top:626px">
<span class="cb"></span>
<span class="t c-ord">ORD-20260207-2151</span>
<span class="t c-date">Feb 04, 2026 09:37</span>
<span class="bdg ch-amzus" style="width:93px">Amazon US</span>
<span class="t c-tot">$15.06</span>
<span class="pb pay-paid" style="width:38px">Paid</span>
<span class="bdg st-ship" style="width:70px">Shipped</span>
<span class="t c-ext">113-2469109-3540233</span>
<span class="eye"><svg width="15" height="10" viewBox="0 0 15 10"><path d="M7 0.9C4 0.9 1.7 2.8 0.7 4.8 1.7 6.7 4 8.6 7 8.6s5.3-1.9 6.3-3.8C12.3 2.8 10 0.9 7 0.9z" fill="none" stroke="#0b57d0" stroke-width="1.3"/><ellipse cx="7.1" cy="3.6" rx="3.2" ry="2.7" fill="#0b57d0"/><circle cx="5.4" cy="2.6" r=".7" fill="#8fb3ec"/></svg></span>
<span class="trash"><svg width="11" height="15" viewBox="0 0 11 15"><path d="M3.2 2.4V1.3c0-.5.3-.8.8-.8h2.6c.5 0 .8.3.8.8v1.1" fill="none" stroke="#c81414" stroke-width="1.1"/><rect x="0.55" y="2.5" width="9.4" height="2.5" rx=".7" fill="#df8080" stroke="#c81414" stroke-width="1"/><path d="M1.1 5.2h8.3l-.55 8c-.05.8-.6 1.3-1.3 1.3H3c-.7 0-1.25-.5-1.3-1.3z" fill="#c81414"/><rect x="2.9" y="6.1" width=".9" height="6.6" fill="#fff" opacity=".55"/><rect x="4.8" y="6.1" width=".9" height="6.6" fill="#fff" opacity=".55"/><rect x="6.7" y="6.1" width=".9" height="6.6" fill="#fff" opacity=".55"/></svg></span>
</div><div class="row" style="top:673px">
<span class="cb"></span>
<span class="t c-ord">ORD-20260206-0732</span>
<span class="t c-date">Feb 04, 2026 04:17</span>
<span class="bdg ch-ebay" style="width:49px">eBay</span>
<span class="t c-tot">$10.29</span>
<span class="pb pay-paid" style="width:38px">Paid</span>
<span class="bdg st-ship" style="width:70px">Shipped</span>
<span class="t c-ext">01-14204-73557</span>
<span class="eye"><svg width="15" height="10" viewBox="0 0 15 10"><path d="M7 0.9C4 0.9 1.7 2.8 0.7 4.8 1.7 6.7 4 8.6 7 8.6s5.3-1.9 6.3-3.8C12.3 2.8 10 0.9 7 0.9z" fill="none" stroke="#0b57d0" stroke-width="1.3"/><ellipse cx="7.1" cy="3.6" rx="3.2" ry="2.7" fill="#0b57d0"/><circle cx="5.4" cy="2.6" r=".7" fill="#8fb3ec"/></svg></span>
<span class="trash"><svg width="11" height="15" viewBox="0 0 11 15"><path d="M3.2 2.4V1.3c0-.5.3-.8.8-.8h2.6c.5 0 .8.3.8.8v1.1" fill="none" stroke="#c81414" stroke-width="1.1"/><rect x="0.55" y="2.5" width="9.4" height="2.5" rx=".7" fill="#df8080" stroke="#c81414" stroke-width="1"/><path d="M1.1 5.2h8.3l-.55 8c-.05.8-.6 1.3-1.3 1.3H3c-.7 0-1.25-.5-1.3-1.3z" fill="#c81414"/><rect x="2.9" y="6.1" width=".9" height="6.6" fill="#fff" opacity=".55"/><rect x="4.8" y="6.1" width=".9" height="6.6" fill="#fff" opacity=".55"/><rect x="6.7" y="6.1" width=".9" height="6.6" fill="#fff" opacity=".55"/></svg></span>
</div><div class="row odd" style="top:720px">
<span class="cb"></span>
<span class="t c-ord">ORD-20260206-2030</span>
<span class="t c-date">Feb 04, 2026 01:16</span>
<span class="bdg ch-amzca" style="width:93px">Amazon CA</span>
<span class="t c-tot">CA$9.72</span>
<span class="pb pay-paid" style="width:38px">Paid</span>
<span class="bdg st-ship" style="width:70px">Shipped</span>
<span class="t c-ext">701-2299491-1528215</span>
<span class="eye"><svg width="15" height="10" viewBox="0 0 15 10"><path d="M7 0.9C4 0.9 1.7 2.8 0.7 4.8 1.7 6.7 4 8.6 7 8.6s5.3-1.9 6.3-3.8C12.3 2.8 10 0.9 7 0.9z" fill="none" stroke="#0b57d0" stroke-width="1.3"/><ellipse cx="7.1" cy="3.6" rx="3.2" ry="2.7" fill="#0b57d0"/><circle cx="5.4" cy="2.6" r=".7" fill="#8fb3ec"/></svg></span>
<span class="trash"><svg width="11" height="15" viewBox="0 0 11 15"><path d="M3.2 2.4V1.3c0-.5.3-.8.8-.8h2.6c.5 0 .8.3.8.8v1.1" fill="none" stroke="#c81414" stroke-width="1.1"/><rect x="0.55" y="2.5" width="9.4" height="2.5" rx=".7" fill="#df8080" stroke="#c81414" stroke-width="1"/><path d="M1.1 5.2h8.3l-.55 8c-.05.8-.6 1.3-1.3 1.3H3c-.7 0-1.25-.5-1.3-1.3z" fill="#c81414"/><rect x="2.9" y="6.1" width=".9" height="6.6" fill="#fff" opacity=".55"/><rect x="4.8" y="6.1" width=".9" height="6.6" fill="#fff" opacity=".55"/><rect x="6.7" y="6.1" width=".9" height="6.6" fill="#fff" opacity=".55"/></svg></span>
</div><div class="row" style="top:767px">
<span class="cb"></span>
<span class="t c-ord">ORD-20260206-2024</span>
<span class="t c-date">Feb 03, 2026 18:22</span>
<span class="bdg ch-amzus" style="width:93px">Amazon US</span>
<span class="t c-tot">$10.71</span>
<span class="pb pay-paid" style="width:38px">Paid</span>
<span class="bdg st-ship" style="width:70px">Shipped</span>
<span class="t c-ext">114-9017099-7663410</span>
<span class="eye"><svg width="15" height="10" viewBox="0 0 15 10"><path d="M7 0.9C4 0.9 1.7 2.8 0.7 4.8 1.7 6.7 4 8.6 7 8.6s5.3-1.9 6.3-3.8C12.3 2.8 10 0.9 7 0.9z" fill="none" stroke="#0b57d0" stroke-width="1.3"/><ellipse cx="7.1" cy="3.6" rx="3.2" ry="2.7" fill="#0b57d0"/><circle cx="5.4" cy="2.6" r=".7" fill="#8fb3ec"/></svg></span>
<span class="trash"><svg width="11" height="15" viewBox="0 0 11 15"><path d="M3.2 2.4V1.3c0-.5.3-.8.8-.8h2.6c.5 0 .8.3.8.8v1.1" fill="none" stroke="#c81414" stroke-width="1.1"/><rect x="0.55" y="2.5" width="9.4" height="2.5" rx=".7" fill="#df8080" stroke="#c81414" stroke-width="1"/><path d="M1.1 5.2h8.3l-.55 8c-.05.8-.6 1.3-1.3 1.3H3c-.7 0-1.25-.5-1.3-1.3z" fill="#c81414"/><rect x="2.9" y="6.1" width=".9" height="6.6" fill="#fff" opacity=".55"/><rect x="4.8" y="6.1" width=".9" height="6.6" fill="#fff" opacity=".55"/><rect x="6.7" y="6.1" width=".9" height="6.6" fill="#fff" opacity=".55"/></svg></span>
</div><div class="row odd" style="top:814px">
<span class="cb"></span>
<span class="t c-ord">ORD-20260206-0766</span>
<span class="t c-date">Feb 03, 2026 14:25</span>
<span class="bdg ch-ebay" style="width:49px">eBay</span>
<span class="t c-tot">$8.89</span>
<span class="pb pay-paid" style="width:38px">Paid</span>
<span class="bdg st-ship" style="width:70px">Shipped</span>
<span class="t c-ext">04-14196-85070</span>
<span class="eye"><svg width="15" height="10" viewBox="0 0 15 10"><path d="M7 0.9C4 0.9 1.7 2.8 0.7 4.8 1.7 6.7 4 8.6 7 8.6s5.3-1.9 6.3-3.8C12.3 2.8 10 0.9 7 0.9z" fill="none" stroke="#0b57d0" stroke-width="1.3"/><ellipse cx="7.1" cy="3.6" rx="3.2" ry="2.7" fill="#0b57d0"/><circle cx="5.4" cy="2.6" r=".7" fill="#8fb3ec"/></svg></span>
<span class="trash"><svg width="11" height="15" viewBox="0 0 11 15"><path d="M3.2 2.4V1.3c0-.5.3-.8.8-.8h2.6c.5 0 .8.3.8.8v1.1" fill="none" stroke="#c81414" stroke-width="1.1"/><rect x="0.55" y="2.5" width="9.4" height="2.5" rx=".7" fill="#df8080" stroke="#c81414" stroke-width="1"/><path d="M1.1 5.2h8.3l-.55 8c-.05.8-.6 1.3-1.3 1.3H3c-.7 0-1.25-.5-1.3-1.3z" fill="#c81414"/><rect x="2.9" y="6.1" width=".9" height="6.6" fill="#fff" opacity=".55"/><rect x="4.8" y="6.1" width=".9" height="6.6" fill="#fff" opacity=".55"/><rect x="6.7" y="6.1" width=".9" height="6.6" fill="#fff" opacity=".55"/></svg></span>
</div>
</div>
<div style="position:absolute;left:956px;top:320.5px;width:1.5px;height:8.5px;background:#4a5360;opacity:.35"></div><div style="position:absolute;left:963px;top:462px;width:74px;height:1px;background:#fdfbe8"></div><div style="position:absolute;left:964px;top:561px;width:74px;height:1px;background:#fdfbe8"></div><div style="position:absolute;left:966px;top:474px;width:2px;height:1px;background:#8a909a;opacity:.7"></div><div class="redact" style="left:958px;top:313px;width:98px;height:24px"></div>
<div class="redact" style="left:1023px;top:424px;width:153px;height:19px"></div>
<div class="redact" style="left:949px;top:503px;width:153px;height:22px"></div>
<div class="redact" style="left:949px;top:688px;width:153px;height:22px"></div>
<div class="redact" style="left:943px;top:784px;width:153px;height:22px"></div>
<div class="redact" style="left:931px;top:1069px;width:153px;height:18px"></div>
</body></html>
